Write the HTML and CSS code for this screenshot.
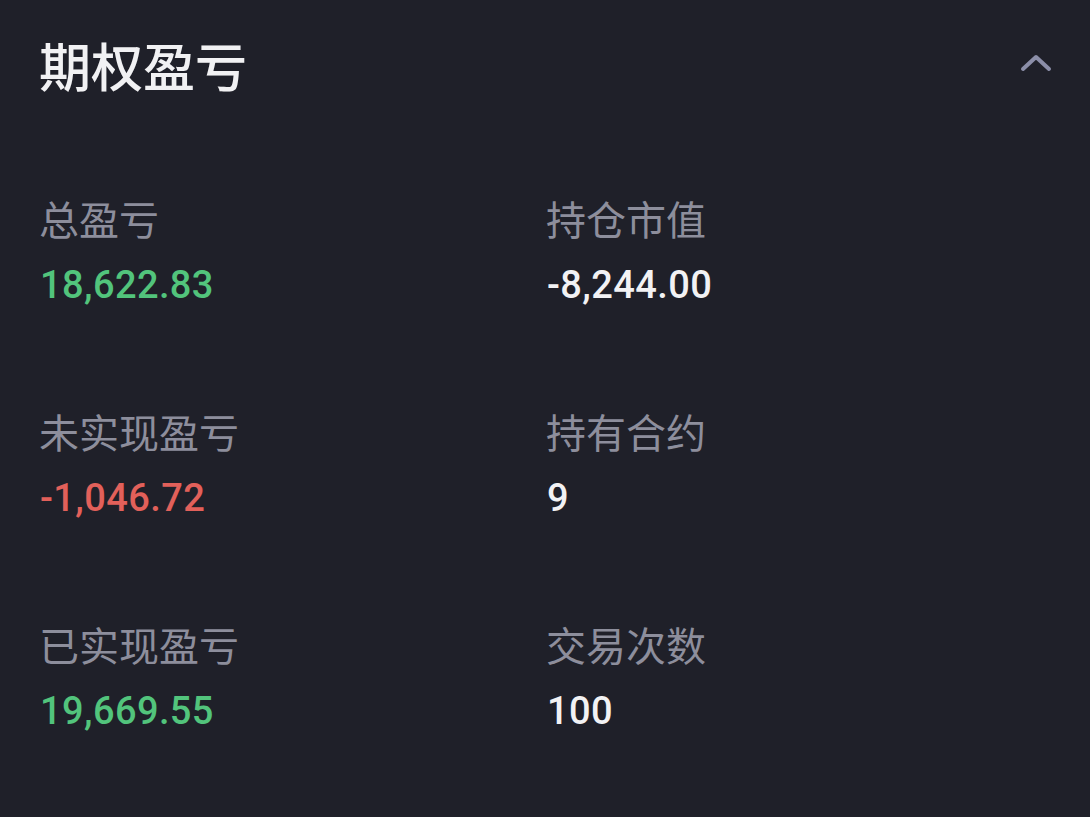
FILE: index.html
```html
<!DOCTYPE html>
<html lang="zh-CN">
<head>
  <meta charset="UTF-8">
  <meta name="viewport" content="width=device-width, initial-scale=1.0">
  <title>期权盈亏</title>
  <link rel="stylesheet" href="styles.css">
</head>
<body>
  <div class="panel">
    <div class="panel-header">
      <h1>期权盈亏</h1>
      <svg class="chevron" width="32" height="20" viewBox="0 0 32 20">
        <path d="M3 17 L16 5 L29 17" fill="none" stroke="#8b8ea8" stroke-width="4" stroke-linecap="round" stroke-linejoin="round"/>
      </svg>
    </div>

    <div class="stats">
      <div class="stat">
        <div class="label">总盈亏</div>
        <div class="value up">18,622.83</div>
      </div>
      <div class="stat">
        <div class="label">持仓市值</div>
        <div class="value">-8,244.00</div>
      </div>
      <div class="stat">
        <div class="label">未实现盈亏</div>
        <div class="value down">-1,046.72</div>
      </div>
      <div class="stat">
        <div class="label">持有合约</div>
        <div class="value">9</div>
      </div>
      <div class="stat">
        <div class="label">已实现盈亏</div>
        <div class="value up">19,669.55</div>
      </div>
      <div class="stat">
        <div class="label">交易次数</div>
        <div class="value">100</div>
      </div>
    </div>
  </div>
</body>
</html>
```

FILE: styles.css
```css
html, body { margin: 0; height: 100%; }
body { background-color: #1f2029; font-family: "Noto Sans CJK SC", "Noto Sans", sans-serif; overflow: hidden; }
.panel { padding: 40px 38px 0 39px; }
.panel-header { display: flex; align-items: center; justify-content: space-between; height: 50px; }
.panel-header h1 { margin: 0; font-size: 52px; line-height: 50px; font-weight: 500; color: #f1f1f3; }
.chevron { margin-top: -6px; }
.stats { display: grid; grid-template-columns: 507px 1fr; row-gap: 107px; margin-top: 108px; }
.stat { display: flex; flex-direction: column; }
.label { font-size: 40px; line-height: 40px; color: #8d8e9c; }
.value { margin-top: 28px; padding-left: 1px; font-family: Roboto, "Noto Sans", sans-serif; font-size: 38px; line-height: 38px; font-weight: 500; letter-spacing: 0.4px; color: #f2f2f4; }
.up { color: #52c47c; }
.down { color: #e2605a; }
```
